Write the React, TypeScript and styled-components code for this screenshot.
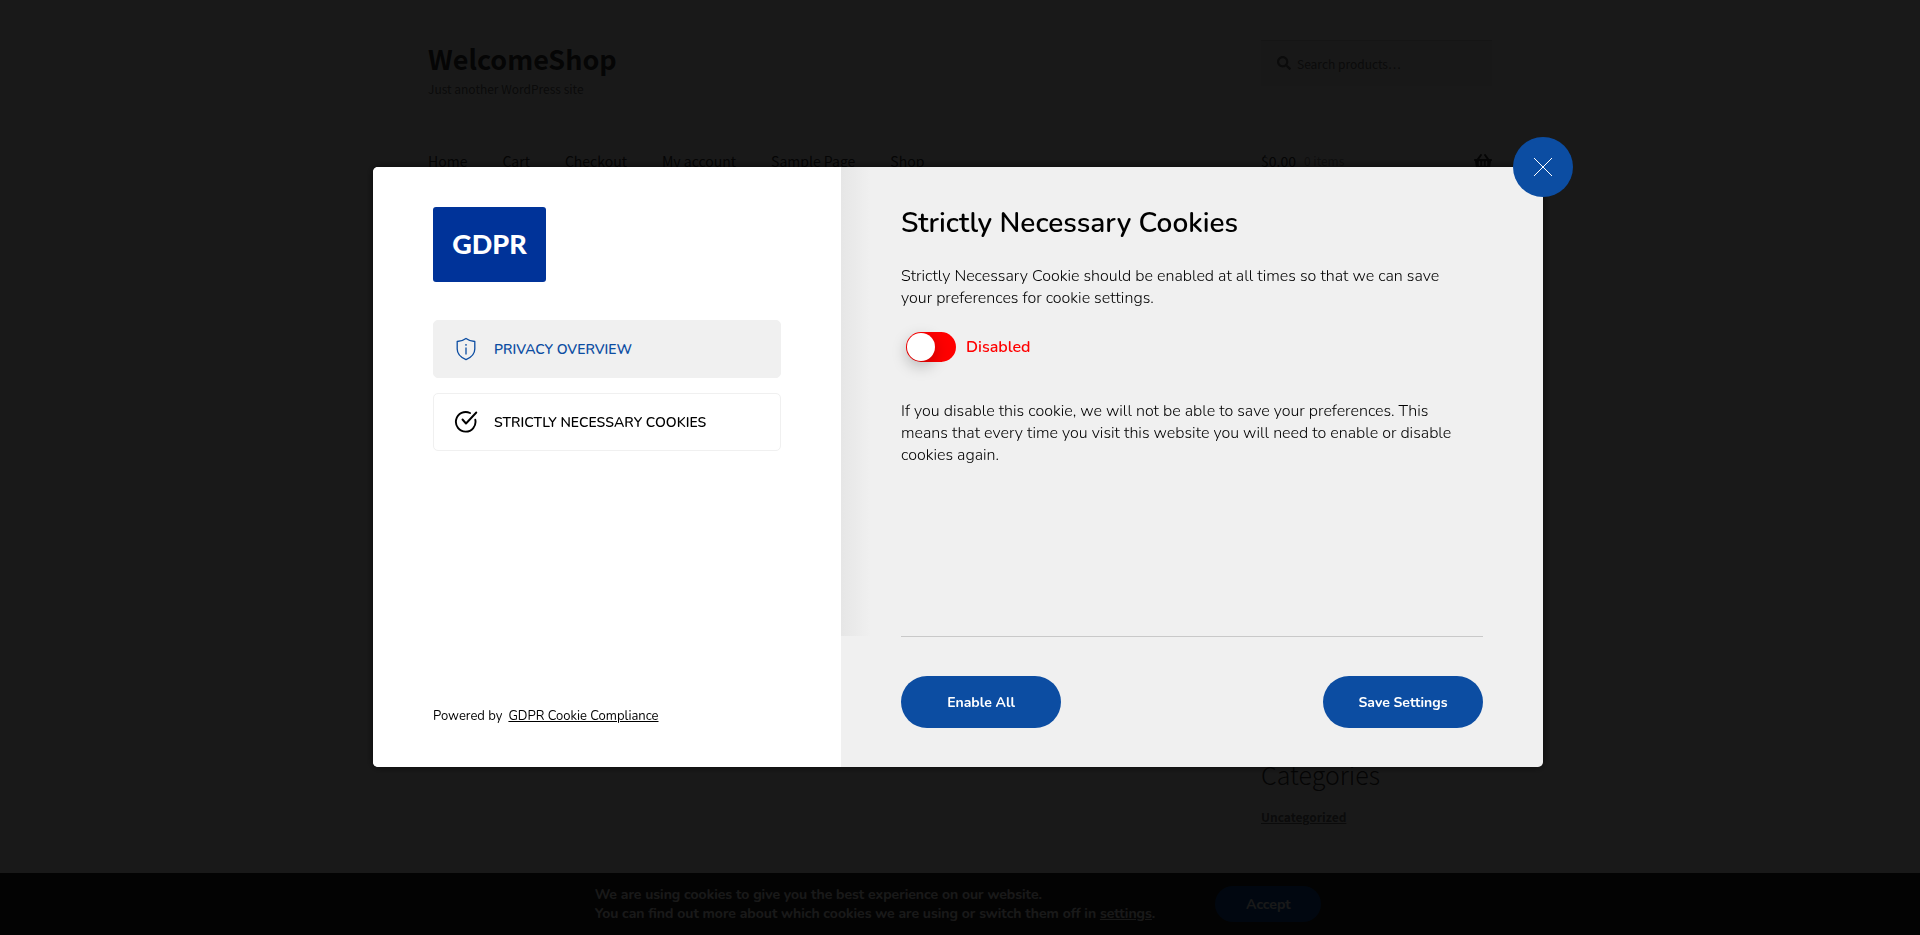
import React, { useState } from "react";
import styled, { createGlobalStyle } from "styled-components";
import { FaSearch, FaShoppingBasket } from "react-icons/fa";

const shopFont = '"Source Sans Pro", "Noto Sans CJK SC", "Open Sans", sans-serif';
const modalFont = 'Nunito, "Open Sans", sans-serif';
const blue = "#0c4da2";

const GlobalStyle = createGlobalStyle`
  *, *::before, *::after { box-sizing: border-box; }
  body { margin: 0; background: #fff; color: #6d6d6d; font-family: ${shopFont}; }
  h1, h2, p { margin: 0; padding: 0; }
  a { color: inherit; }
  button { border: 0; padding: 0; cursor: pointer; font-family: inherit; }
`;

const Page = styled.div`
  min-height: 100vh;
  max-width: 1064px;
  margin: 0 auto;
  padding-top: 40px;
`;

const HeaderGrid = styled.header`
  display: grid;
  grid-template-columns: 1fr 231px;
  row-gap: 51px;
`;

const SiteTitle = styled.h1`
  color: #333;
  font-size: 27px;
  line-height: 38px;
  font-weight: 700;
`;

const Tagline = styled.p`
  font-size: 12px;
  line-height: 22px;
`;

const SearchBox = styled.label`
  display: flex;
  align-items: center;
  gap: 6px;
  height: 46px;
  padding: 0 16px;
  background: #f2f2f2;
  box-shadow: inset 0 1px 1px rgba(0, 0, 0, 0.12);
  font-size: 14px;
`;

const SearchInput = styled.input`
  flex: 1;
  min-width: 0;
  border: 0;
  padding: 0;
  background: none;
  outline: none;
  font: 12px ${shopFont};
  &::placeholder { color: #6d6d6d; opacity: 1; }
`;

const Nav = styled.nav`
  display: flex;
  gap: 35px;
  color: #333;
  font-size: 14px;
  line-height: 20px;
`;

const NavLink = styled.a`
  text-decoration: none;
`;

const CartLink = styled.a`
  display: flex;
  align-items: center;
  gap: 8px;
  color: #333;
  font-size: 14px;
  line-height: 20px;
  text-decoration: none;
  svg { margin-left: auto; font-size: 18px; }
`;

const ItemCount = styled.span`
  color: #999;
  font-size: 12px;
`;

const Sidebar = styled.aside`
  width: 231px;
  margin: 584px 0 120px auto;
`;

const WidgetTitle = styled.h2`
  color: #333;
  font-size: 25px;
  line-height: 38px;
  font-weight: 300;
  margin-bottom: 10px;
`;

const Category = styled.a`
  font-size: 12px;
  line-height: 20px;
  font-weight: 600;
`;

const CookieBar = styled.section`
  position: fixed;
  inset: auto 0 0;
  display: flex;
  align-items: center;
  justify-content: center;
  gap: 60px;
  height: 62px;
  padding-right: 4px;
  background: #202020;
  color: #fff;
  font-family: ${modalFont};
  font-size: 14px;
  line-height: 18px;
  font-weight: 700;
`;

const TextButton = styled.button`
  background: none;
  color: inherit;
  font-size: inherit;
  font-weight: inherit;
  text-decoration: underline;
`;

const AcceptButton = styled.button`
  width: 106px;
  height: 36px;
  border-radius: 18px;
  background: ${blue};
  color: #fff;
  font-size: 14px;
  font-weight: 700;
`;

const Overlay = styled.div`
  position: fixed;
  inset: 0;
  display: flex;
  align-items: center;
  justify-content: center;
  padding: 0 34px 1px 30px;
  background: rgba(0, 0, 0, 0.9);
  font-family: ${modalFont};
`;

const Modal = styled.div`
  position: relative;
  display: grid;
  grid-template-columns: 2fr 3fr;
  width: 100%;
  max-width: 1170px;
  min-height: 600px;
  border-radius: 5px;
  background: #f0f0f0;
  color: #000;
  box-shadow: 0 0 8px rgba(0, 0, 0, 0.6);
`;

const CloseButton = styled.button`
  position: absolute;
  top: -30px;
  right: -30px;
  display: grid;
  place-items: center;
  width: 60px;
  height: 60px;
  border-radius: 50%;
  background: ${blue};
  color: #fff;
`;

const Side = styled.div`
  display: flex;
  flex-direction: column;
  align-items: stretch;
  padding: 40px 60px;
  border-radius: 5px 0 0 5px;
  background: #fff;
`;

const Logo = styled.div`
  display: grid;
  place-items: center;
  align-self: flex-start;
  width: 113px;
  height: 75px;
  padding-bottom: 2px;
  margin-bottom: 38px;
  border-radius: 3px;
  background: #003399;
  color: #fff;
  font: 900 27px Lato, sans-serif;
`;

const TabList = styled.div`
  display: grid;
  gap: 15px;
`;

const Tab = styled.button<{ $active?: boolean }>`
  display: flex;
  align-items: center;
  gap: 16px;
  height: 58px;
  padding: 0 20px;
  border: 1px solid #f0f0f0;
  border-radius: 5px;
  background: ${(p) => (p.$active ? "#f0f0f0" : "#fff")};
  color: ${(p) => (p.$active ? blue : "#000")};
  font-size: 14px;
  font-weight: 600;
  text-transform: uppercase;
`;

const Powered = styled.p`
  display: flex;
  gap: 6px;
  margin-top: auto;
  font-size: 13px;
  line-height: 22px;
`;

const Content = styled.div`
  display: flex;
  flex-direction: column;
`;

const Body = styled.div`
  flex: 1;
  padding: 38px 80px 0 60px;
  background: linear-gradient(to right, #e6e6e6, #f0f0f0 30px);
`;

const Heading = styled.h2`
  font-size: 28px;
  line-height: 36px;
  font-weight: 600;
  margin-bottom: 24px;
`;

const Paragraph = styled.p`
  font-size: 16px;
  line-height: 22px;
  font-weight: 300;
`;

const SwitchRow = styled.label`
  display: flex;
  align-items: center;
  gap: 10px;
  padding: 23px 5px 38px;
  color: #f00;
  font-size: 16px;
  line-height: 30px;
  font-weight: 600;
`;

const Switch = styled.input`
  appearance: none;
  width: 50px;
  height: 30px;
  margin: 0;
  padding: 1px;
  border-radius: 15px;
  background: #f00;
  cursor: pointer;
  &::before {
    content: "";
    display: block;
    width: 28px;
    height: 28px;
    border-radius: 50%;
    background: #fff;
    box-shadow: 0 5px 15px rgba(0, 0, 0, 0.25);
  }
  &:checked { background: ${blue}; }
  &:checked::before { margin-left: 20px; }
`;

const Actions = styled.div`
  display: flex;
  justify-content: space-between;
  margin: 0 60px;
  padding: 39px 0;
  border-top: 1px solid #c9c9c9;
`;

const ActionButton = styled.button`
  width: 160px;
  height: 52px;
  border-radius: 26px;
  background: ${blue};
  color: #fff;
  font-size: 14px;
  font-weight: 700;
`;

const ShieldIcon = () => (
  <svg width="24" height="24" viewBox="0 0 24 24" fill="none" stroke="currentColor" strokeWidth="1.3" aria-hidden="true">
    <path d="M12 1.4C9.6 3.2 6.5 4.3 3.2 4.5V12c0 5 3.5 8.4 8.8 10.6 5.3-2.2 8.8-5.6 8.8-10.6V4.5C17.5 4.300 14.400 3.200 12 1.400z" strokeLinejoin="round" />
    <path d="M12 7v1.8M12 10.500v7" />
  </svg>
);

const CheckIcon = () => (
  <svg width="24" height="24" viewBox="0 0 24 24" fill="none" stroke="currentColor" strokeWidth="1.9" strokeLinecap="round" strokeLinejoin="round" aria-hidden="true">
    <path d="M16 3A9.800 9.800 0 1 0 21.300 9.800" />
    <path d="M8.500 9.500l3.500 4L22.300 2.500" />
  </svg>
);

const CloseIcon = () => (
  <svg width="18" height="18" viewBox="0 0 18 18" stroke="currentColor" strokeWidth="1" aria-hidden="true">
    <path d="M0 0L18 18M18 0L0 18" />
  </svg>
);

const navItems = ["Home", "Cart", "Checkout", "My account", "Sample Page", "Shop"];

export default function App() {
  const [enabled, setEnabled] = useState(false);
  return (
    <>
      <GlobalStyle />
      <Page>
        <HeaderGrid>
          <div>
            <SiteTitle>WelcomeShop</SiteTitle>
            <Tagline>Just another WordPress site</Tagline>
          </div>
          <SearchBox>
            <FaSearch />
            <SearchInput type="search" placeholder="Search products…" aria-label="Search products" />
          </SearchBox>
          <Nav>
            {navItems.map((item) => (
              <NavLink href="#" key={item}>{item}</NavLink>
            ))}
          </Nav>
          <CartLink href="#">
            $0.00 <ItemCount>0 items</ItemCount>
            <FaShoppingBasket />
          </CartLink>
        </HeaderGrid>
        <Sidebar>
          <WidgetTitle>Categories</WidgetTitle>
          <Category href="#">Uncategorized</Category>
        </Sidebar>
      </Page>
      <CookieBar>
        <div>
          <p>We are using cookies to give you the best experience on our website.</p>
          <p>
            You can find out more about which cookies we are using or switch them off in{" "}
            <TextButton>settings</TextButton>.
          </p>
        </div>
        <AcceptButton>Accept</AcceptButton>
      </CookieBar>
      <Overlay>
        <Modal role="dialog" aria-label="Cookie settings">
          <Side>
            <Logo>GDPR</Logo>
            <TabList>
              <Tab $active>
                <ShieldIcon />
                Privacy Overview
              </Tab>
              <Tab>
                <CheckIcon />
                Strictly Necessary Cookies
              </Tab>
            </TabList>
            <Powered>
              Powered by <a href="#">GDPR Cookie Compliance</a>
            </Powered>
          </Side>
          <Content>
            <Body>
              <Heading>Strictly Necessary Cookies</Heading>
              <Paragraph>
                Strictly Necessary Cookie should be enabled at all times so that we can save your preferences for cookie settings.
              </Paragraph>
              <SwitchRow>
                <Switch type="checkbox" checked={enabled} onChange={(e) => setEnabled(e.target.checked)} />
                {enabled ? "Enabled" : "Disabled"}
              </SwitchRow>
              <Paragraph>
                If you disable this cookie, we will not be able to save your preferences. This means that every time you visit this website you will need to enable or disable cookies again.
              </Paragraph>
            </Body>
            <Actions>
              <ActionButton>Enable All</ActionButton>
              <ActionButton>Save Settings</ActionButton>
            </Actions>
          </Content>
          <CloseButton aria-label="Close">
            <CloseIcon />
          </CloseButton>
        </Modal>
      </Overlay>
    </>
  );
}
